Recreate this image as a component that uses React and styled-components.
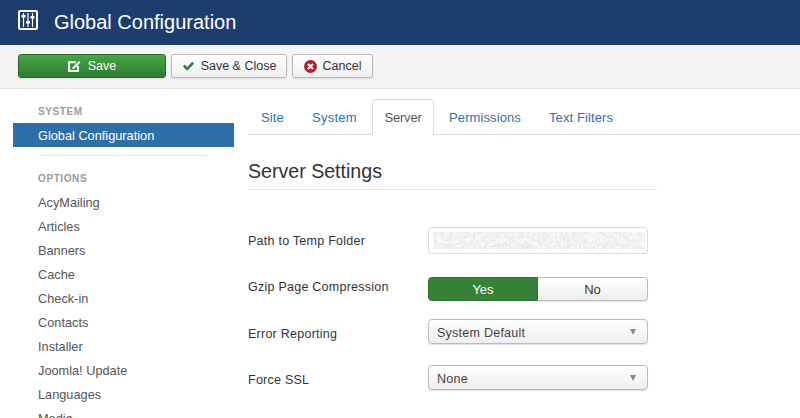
import React from "react";
import styled, { createGlobalStyle } from "styled-components";

const Global = createGlobalStyle`
  html, body { margin: 0; padding: 0; background: #fff; }
  body { font-family: "Liberation Sans", Arial, sans-serif; font-size: 13px; color: #333; }
  * { box-sizing: border-box; }
`;

const Page = styled.div`
  width: 800px;
  height: 418px;
  overflow: hidden;
  display: flex;
  flex-direction: column;
`;
const Header = styled.header`
  height: 45px;
  background: #1c3d6e;
  display: flex;
  align-items: flex-start;
  padding: 10px 0 0 18px;
  gap: 16px;
  flex: none;
`;
const Title = styled.h1`
  margin: 0;
  font-size: 20px;
  line-height: 24px;
  font-weight: 400;
  color: #fff;
`;
const Toolbar = styled.div`
  height: 44px;
  flex: none;
  background: #f5f5f5;
  border-bottom: 1px solid #e2e2e2;
  display: flex;
  align-items: flex-start;
  padding: 9px 0 0 18px;
  gap: 5px;
`;
const Button = styled.button`
  height: 24px;
  width: ${(p) => p.$w}px;
  padding: 0;
  display: flex;
  align-items: center;
  justify-content: center;
  gap: ${(p) => (p.$primary ? 7 : 6)}px;
  font: 12.5px "Liberation Sans", Arial, sans-serif;
  color: ${(p) => (p.$primary ? "#fff" : "#333")};
  background: ${(p) =>
    p.$primary ? "linear-gradient(#46a546, #2f7d32)" : "linear-gradient(#fff, #f0f0f0)"};
  border: 1px solid ${(p) => (p.$primary ? "#2a6b2d" : "#b8b8b8")};
  border-radius: 3px;
  box-shadow: 0 1px 2px rgba(0, 0, 0, 0.1);
`;
const Body = styled.div`
  flex: 1;
  display: flex;
  min-height: 0;
`;
const Sidebar = styled.nav`
  width: 221px;
  margin-left: 13px;
  flex: none;
  padding-top: 16px;
`;
const SideHeading = styled.div`
  padding-left: 25px;
  font-size: 10px;
  font-weight: 700;
  line-height: 14px;
  letter-spacing: 0.6px;
  color: #9a9a9a;
  margin-bottom: 4px;
`;
const SideItem = styled.div`
  height: 24px;
  line-height: 26px;
  padding-left: 25px;
  font-size: 12.75px;
  color: ${(p) => (p.$active ? "#fff" : "#555")};
  background: ${(p) => (p.$active ? "#2f6fa8" : "transparent")};
`;
const SideRule = styled.hr`
  margin: 8px 27px 16px 26px;
  border: 0;
  border-top: 1px solid #e5e5e5;
`;
const Main = styled.main`
  margin-left: 14px;
  width: 552px;
  padding-top: 10px;
`;
const Tabs = styled.div`
  display: flex;
  height: 36px;
  border-bottom: 1px solid #ddd;
`;
const Tab = styled.div`
  height: 36px;
  width: ${(p) => p.$w}px;
  display: flex;
  align-items: center;
  justify-content: center;
  margin-right: 2px;
  font-size: 13px;
  white-space: nowrap;
  letter-spacing: ${(p) => p.$ls ?? 0.1}px;
  border: 1px solid ${(p) => (p.$active ? "#ddd" : "transparent")};
  border-bottom-color: ${(p) => (p.$active ? "#fff" : "transparent")};
  border-radius: 4px 4px 0 0;
  color: ${(p) => (p.$active ? "#555" : "#3071a9")};
  background: ${(p) => (p.$active ? "#fff" : "transparent")};
`;
const Form = styled.div`
  width: 409px;
`;
const Heading = styled.h2`
  margin: 23px 0 0;
  height: 32px;
  font-size: 19.6px;
  font-weight: 400;
  line-height: 26px;
  color: #333;
  border-bottom: 1px solid #e5e5e5;
`;
const Row = styled.div`
  display: flex;
  align-items: flex-start;
  margin-top: ${(p) => p.$mt}px;
`;
const Label = styled.label`
  width: 180px;
  flex: none;
  font-size: 12.5px;
  letter-spacing: 0.25px;
  line-height: 16px;
  padding-top: ${(p) => p.$pt}px;
`;
const Input = styled.div`
  width: 220px;
  height: 27px;
  border: 1px solid #ddd;
  border-radius: 3px;
  padding: 4px 2px 4px 4px;
`;
const Noise = styled.svg`
  display: block;
  width: 100%;
  height: 100%;
`;
const Toggle = styled.div`
  width: 220px;
  height: 24px;
  display: flex;
`;
const ToggleOn = styled.div`
  width: 110px;
  display: flex;
  align-items: center;
  justify-content: center;
  color: #fff;
  font-size: 13px;
  background: #378137;
  border: 1px solid #2f7331;
  border-radius: 4px 0 0 4px;
`;
const ToggleOff = styled.div`
  width: 110px;
  display: flex;
  align-items: center;
  justify-content: center;
  color: #333;
  font-size: 13px;
  background: linear-gradient(#fff, #eee);
  border: 1px solid #bbb;
  border-left: 0;
  border-radius: 0 4px 4px 0;
  box-shadow: 0 1px 1px rgba(0, 0, 0, 0.1);
`;
const Select = styled.div`
  width: 220px;
  height: 25px;
  display: flex;
  align-items: center;
  justify-content: space-between;
  padding: 2px 11px 0 8px;
  font-size: 12.5px;
  letter-spacing: 0.25px;
  color: #444;
  background: linear-gradient(#fff, #eee);
  border: 1px solid #bbb;
  border-radius: 4px;
  box-shadow: 0 1px 1px rgba(0, 0, 0, 0.12);
`;
const Caret = styled.span`
  width: 0;
  height: 0;
  margin-top: -2px;
  border-left: 3.5px solid transparent;
  border-right: 3.5px solid transparent;
  border-top: 6px solid #888;
`;

const SlidersIcon = () => (
  <svg width="20" height="20" viewBox="0 0 20 20" fill="none">
    <rect x="1" y="1" width="18" height="18" rx="1" stroke="#fff" strokeWidth="2" />
    <path d="M5.5 3v14M10 3v14M14.5 3v14" stroke="#fff" strokeWidth="1.2" />
    <g fill="#fff">
      <rect x="3.5" y="5" width="4" height="2.5" />
      <rect x="8" y="11" width="4" height="2.5" />
      <rect x="12.5" y="6" width="4" height="2.5" />
    </g>
  </svg>
);
const EditIcon = () => (
  <svg width="13" height="12" viewBox="0 0 13 12" fill="none">
    <path d="M8 2.2H1v8.8h9V6" stroke="#fff" strokeWidth="2" />
    <path d="M4.5 7.5 11 1l1.5 1.5L6 9H4.5z" fill="#fff" />
  </svg>
);
const CheckIcon = () => (
  <svg width="13" height="12" viewBox="0 0 14 12">
    <path d="M1 6.5 3 4.5 5.5 7 11 1.5 13 3.5 5.5 11z" fill="#2f7d4a" />
  </svg>
);
const CancelIcon = () => (
  <svg width="13" height="13" viewBox="0 0 13 13">
    <circle cx="6.5" cy="6.5" r="6.5" fill="#a8242c" />
    <path d="M4 4 9 9M9 4 4 9" stroke="#fff" strokeWidth="2" />
  </svg>
);

const tints = ["#f4f4f4", "#ebebeb", "#f6eff2", "#eef1ec", "#fafafa", "#e8e8ea"];
let seed = 7;
const rand = () => {
  seed = (seed * 16807) % 2147483647;
  return seed;
};
const noise = [];
for (let y = 0; y < 18; y += 2) {
  for (let x = 0; x < 212; x += 2) {
    noise.push({ x, y, c: tints[rand() % tints.length] });
  }
}

const options = [
  "AcyMailing",
  "Articles",
  "Banners",
  "Cache",
  "Check-in",
  "Contacts",
  "Installer",
  "Joomla! Update",
  "Languages",
  "Media",
];

export default function App() {
  return (
    <Page>
      <Global />
      <Header>
        <SlidersIcon />
        <Title>Global Configuration</Title>
      </Header>
      <Toolbar>
        <Button $primary $w={148}>
          <EditIcon />
          Save
        </Button>
        <Button $w={116}>
          <CheckIcon />
          Save &amp; Close
        </Button>
        <Button $w={81}>
          <CancelIcon />
          Cancel
        </Button>
      </Toolbar>
      <Body>
        <Sidebar>
          <SideHeading>SYSTEM</SideHeading>
          <SideItem $active>Global Configuration</SideItem>
          <SideRule />
          <SideHeading>OPTIONS</SideHeading>
          {options.map((o) => (
            <SideItem key={o}>{o}</SideItem>
          ))}
        </Sidebar>
        <Main>
          <Tabs>
            <Tab $w={49}>Site</Tab>
            <Tab $w={71} $ls={0.25}>System</Tab>
            <Tab $w={62} $ls={-0.2} $active>Server</Tab>
            <Tab $w={98}>Permissions</Tab>
            <Tab $w={90}>Text Filters</Tab>
          </Tabs>
          <Form>
            <Heading>Server Settings</Heading>
            <Row $mt={37}>
              <Label $pt={6}>Path to Temp Folder</Label>
              <Input>
                <Noise viewBox="0 0 212 18" preserveAspectRatio="none">
                  {noise.map((n, i) => (
                    <rect key={i} x={n.x} y={n.y} width="2" height="2" fill={n.c} />
                  ))}
                </Noise>
              </Input>
            </Row>
            <Row $mt={23}>
              <Label $pt={2}>Gzip Page Compression</Label>
              <Toggle>
                <ToggleOn>Yes</ToggleOn>
                <ToggleOff>No</ToggleOff>
              </Toggle>
            </Row>
            <Row $mt={18}>
              <Label $pt={7}>Error Reporting</Label>
              <Select>
                System Default
                <Caret />
              </Select>
            </Row>
            <Row $mt={21}>
              <Label $pt={7}>Force SSL</Label>
              <Select>
                None
                <Caret />
              </Select>
            </Row>
          </Form>
        </Main>
      </Body>
    </Page>
  );
}
